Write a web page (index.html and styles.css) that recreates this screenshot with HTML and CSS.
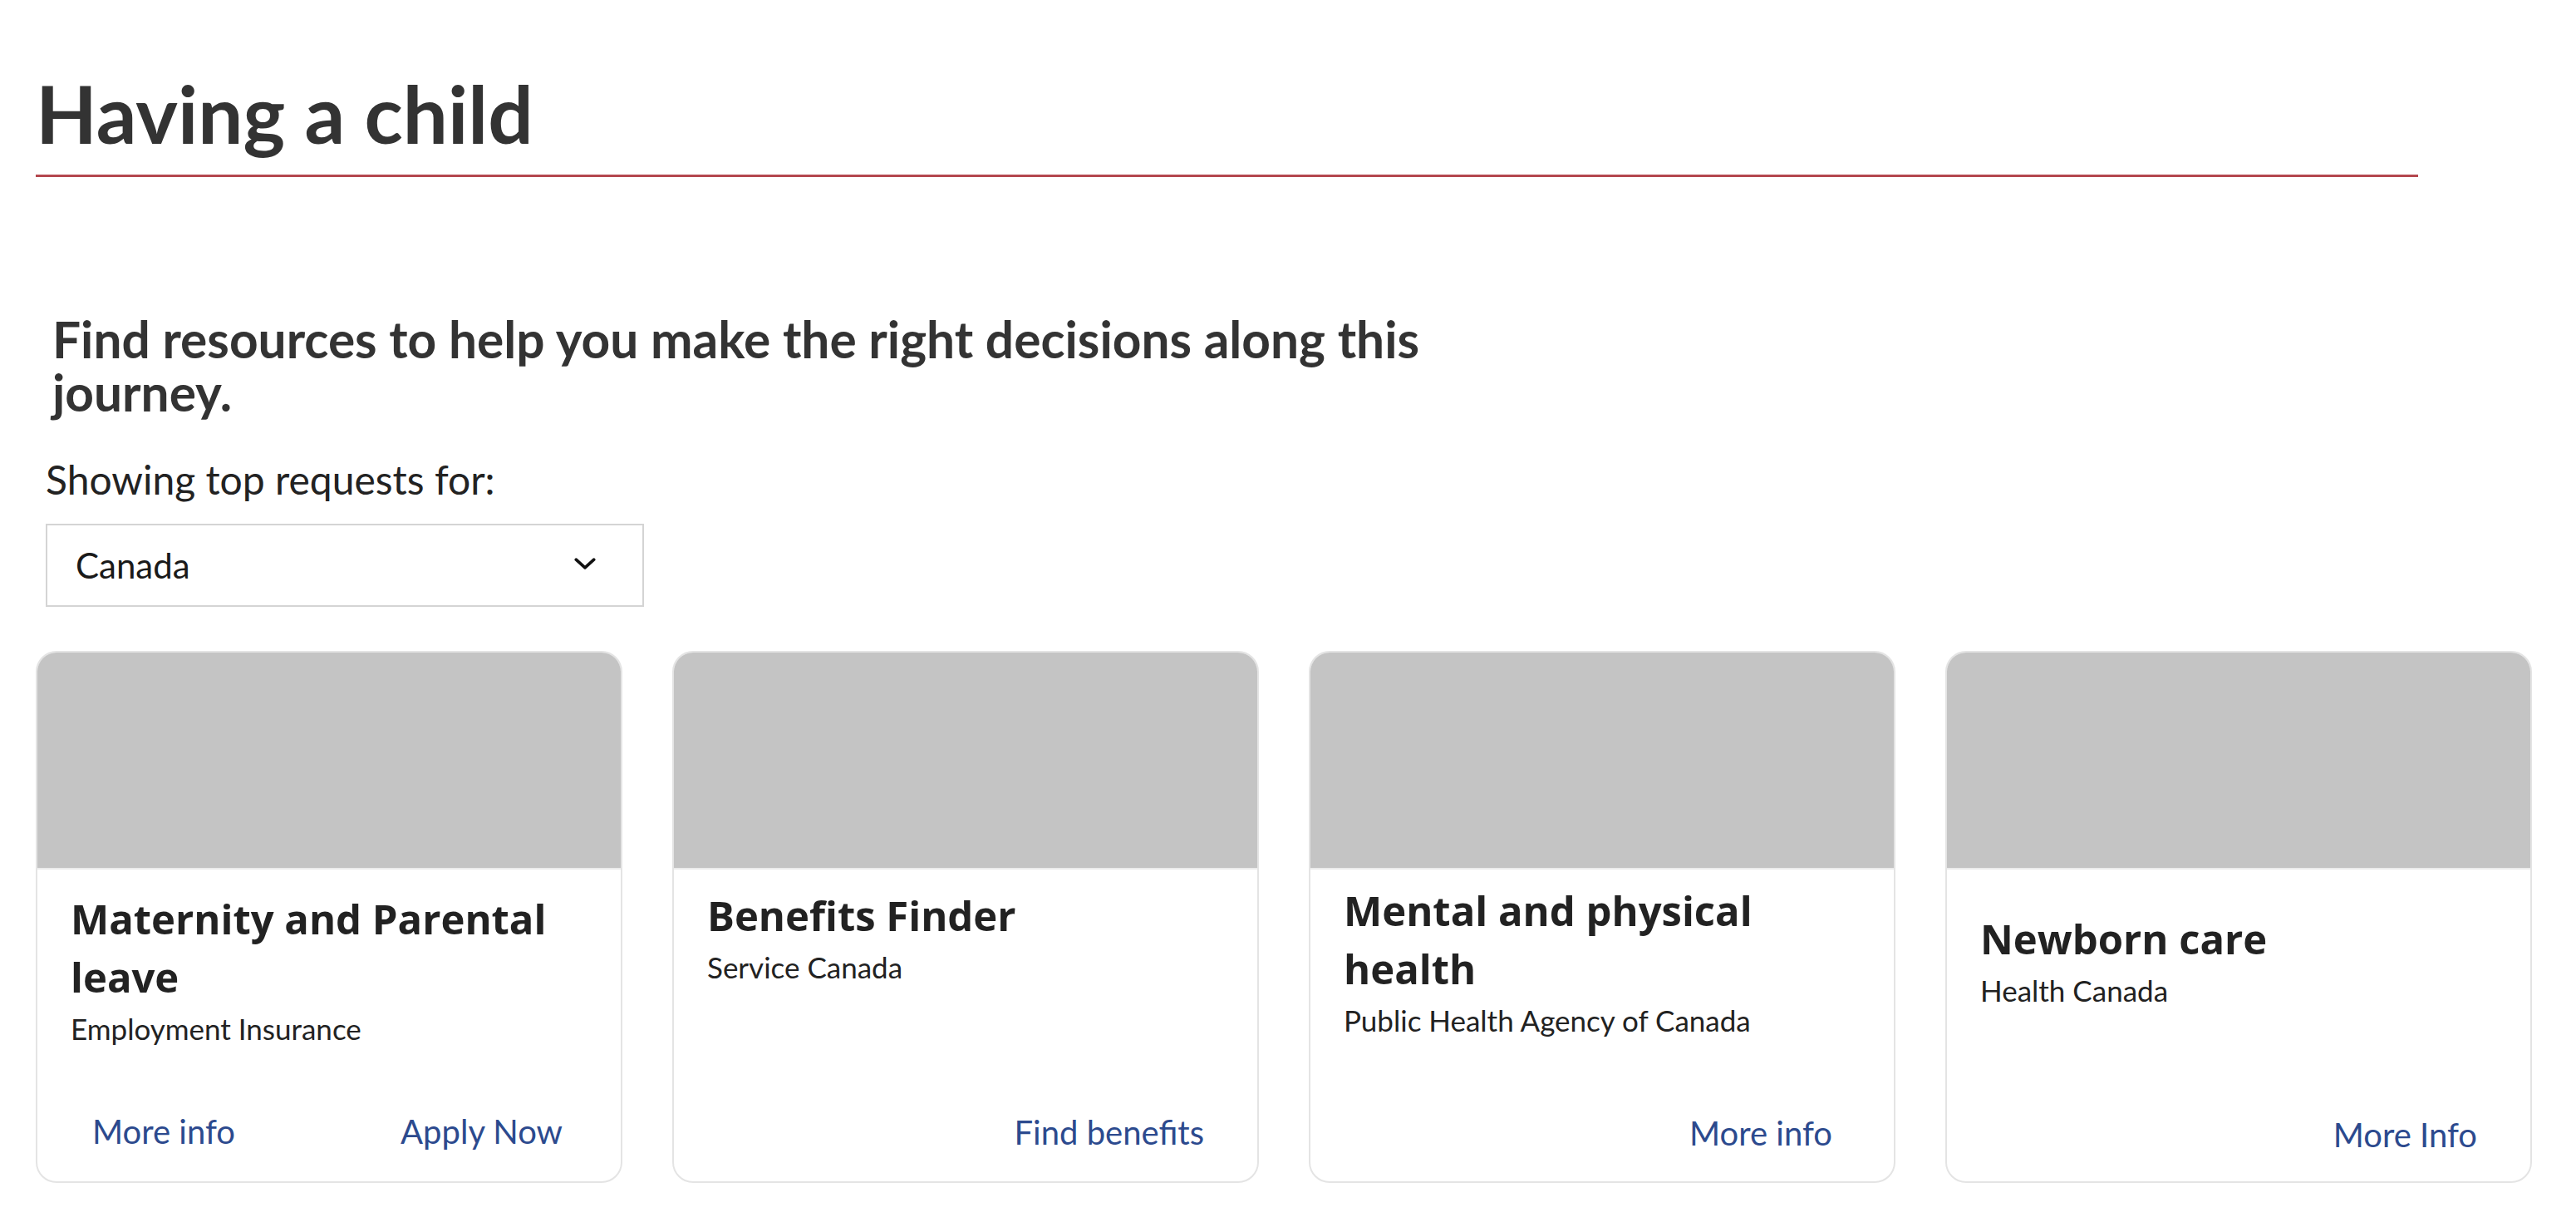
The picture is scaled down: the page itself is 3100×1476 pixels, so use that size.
FILE: index.html
```html
<!DOCTYPE html>
<html lang="en">
<head>
<meta charset="utf-8">
<title>Having a child</title>
<link rel="stylesheet" href="styles.css">
</head>
<body>
<main class="page">
  <header class="page-header">
    <h1 class="page-title">Having a child</h1>
  </header>

  <section class="intro">
    <h2 class="intro-lead">Find resources to help you make the right decisions along this journey.</h2>
    <label class="intro-label" for="region">Showing top requests for:</label>
    <div class="select">
      <span class="select-value" id="region">Canada</span>
      <svg class="select-chevron" viewBox="0 0 24 14" aria-hidden="true"><path d="M2 2 L12 11 L22 2" fill="none" stroke="#111" stroke-width="3.4" stroke-linecap="round" stroke-linejoin="round"/></svg>
    </div>
  </section>

  <section class="cards">
    <article class="card card--one">
      <div class="card-media"></div>
      <div class="card-body">
        <h3 class="card-title">Maternity and Parental leave</h3>
        <p class="card-sub">Employment Insurance</p>
      </div>
      <div class="card-actions card-actions--split">
        <a class="card-link" href="#">More info</a>
        <a class="card-link" href="#">Apply Now</a>
      </div>
    </article>

    <article class="card card--two">
      <div class="card-media"></div>
      <div class="card-body">
        <h3 class="card-title">Benefits Finder</h3>
        <p class="card-sub">Service Canada</p>
      </div>
      <div class="card-actions">
        <a class="card-link" href="#">Find benefits</a>
      </div>
    </article>

    <article class="card card--three">
      <div class="card-media"></div>
      <div class="card-body">
        <h3 class="card-title">Mental and physical health</h3>
        <p class="card-sub">Public Health Agency of Canada</p>
      </div>
      <div class="card-actions">
        <a class="card-link" href="#">More info</a>
      </div>
    </article>

    <article class="card card--four">
      <div class="card-media"></div>
      <div class="card-body">
        <h3 class="card-title">Newborn care</h3>
        <p class="card-sub">Health Canada</p>
      </div>
      <div class="card-actions">
        <a class="card-link" href="#">More Info</a>
      </div>
    </article>
  </section>
</main>
</body>
</html>
```

FILE: styles.css
```css
* { box-sizing: border-box; }

html, body {
  margin: 0;
  padding: 0;
  background: #ffffff;
}

body {
  font-family: "Lato", "Noto Sans", sans-serif;
  color: #333333;
}

.page {
  width: 3100px;
  padding: 0 0 0 43px;
}

.page-header {
  width: 2867px;
  border-bottom: 3px solid #b4474e;
  padding-top: 76px;
  padding-bottom: 14px;
}

.page-title {
  margin: 0;
  font-family: "Lato", sans-serif;
  font-weight: 700;
  font-size: 96px;
  line-height: 120px;
  color: #333333;
}

.intro {
  padding: 163px 0 0 20px;
  display: flex;
  flex-direction: column;
  align-items: flex-start;
}

.intro-lead {
  margin: 0;
  max-width: 1730px;
  font-family: "Lato", sans-serif;
  font-weight: 700;
  font-size: 60.4px;
  line-height: 64px;
  color: #333333;
}

.intro-label {
  margin: 44px 0 0 -8px;
  font-size: 48px;
  line-height: 58px;
  color: #222222;
}

.select {
  margin: 24px 0 0 -8px;
  width: 720px;
  height: 100px;
  border: 2px solid #d4d4d4;
  display: flex;
  align-items: center;
  justify-content: space-between;
  padding: 0 56px 0 34px;
}

.select-value {
  font-size: 42px;
  color: #1a1a1a;
}

.select-chevron {
  width: 26px;
  height: 15px;
  margin-top: -4px;
}

.cards {
  margin-top: 53px;
  display: flex;
  gap: 60px;
  align-items: stretch;
}

.card {
  width: 706px;
  height: 640px;
  border: 2px solid #e4e4e4;
  border-radius: 25px;
  overflow: hidden;
  display: flex;
  flex-direction: column;
  background: #ffffff;
}

.card-media {
  height: 261px;
  background: #c4c4c4;
  border-bottom: 2px solid #ececec;
  flex: none;
}

.card-body {
  padding: 24px 40px 0 40px;
  flex: 1;
}

.card--two .card-body { padding-top: 20px; }
.card--three .card-body { padding-top: 14px; }
.card--four .card-body { padding-top: 48px; }

.card-title {
  margin: 0;
  font-family: "Open Sans", "Noto Sans", sans-serif;
  font-weight: 700;
  font-size: 49px;
  line-height: 70px;
  color: #222222;
}

.card-sub {
  margin: 6px 0 0 0;
  font-size: 35px;
  line-height: 42px;
  color: #222222;
}

.card-actions {
  display: flex;
  justify-content: flex-end;
  padding: 0 70px 36px 66px;
}

.card-actions--split {
  justify-content: space-between;
}

.card--two .card-actions { padding-right: 64px; padding-bottom: 35px; }
.card--three .card-actions { padding-right: 74px; padding-bottom: 34px; }
.card--four .card-actions { padding-right: 64px; padding-bottom: 32px; }

.card-link {
  font-size: 40px;
  line-height: 48px;
  color: #2c4a8e;
  text-decoration: none;
}
```
